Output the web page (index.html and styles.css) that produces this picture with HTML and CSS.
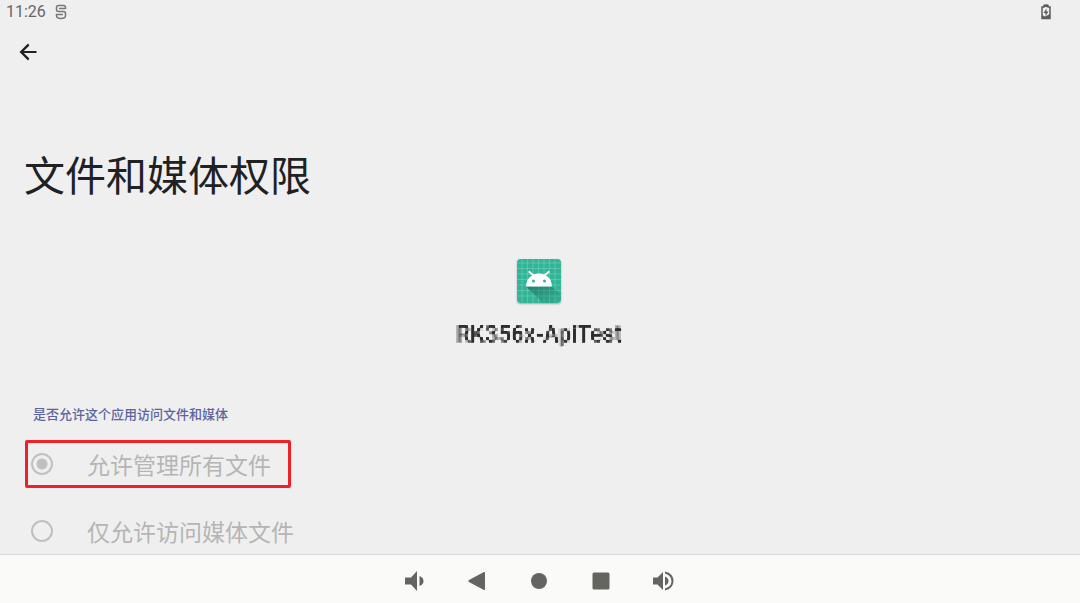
FILE: index.html
```
<!DOCTYPE html>
<html lang="zh-CN">
<head>
    <meta charset="UTF-8">
    <meta name="viewport" content="width=device-width, initial-scale=1.0">
    <title>文件和媒体权限</title>
    <link rel="stylesheet" href="styles.css">
</head>
<body>
    <header class="status-bar">
        <div class="status-left">
            <span class="clock">11:26</span>
            <svg class="notice-icon" viewBox="0 0 12 16" aria-hidden="true">
                <path d="M10.500 5V3.500Q10.500 1.500 8.500 1.500H3.500Q1.500 1.500 1.500 3.500V5.500Q1.500 7.500 3.500 7.500H8.500Q10.500 7.500 10.500 9.500V11.500Q10.500 14.500 6 14.500Q1.500 14.500 1.500 11.500V10.500H8M4 4.500H10.500" />
            </svg>
        </div>
        <svg class="battery-icon" viewBox="0 0 10 16" aria-hidden="true">
            <path class="battery-case" d="M3 1.500H7V3H9V14.500H1V3H3Z" />
            <path class="battery-cap" d="M3 0.500H7V3H3Z" />
            <path class="battery-cap" d="M1 11L4 12.500L9 10V15H1Z" />
            <path class="battery-cap" d="M5.500 4.500L2.500 9H4.500V12L7.500 7.500H5.500Z" />
        </svg>
    </header>

    <main class="content">
        <button class="back-button" type="button" aria-label="返回">
            <svg viewBox="0 0 24 24"><path d="M20.500 11H7.830l5.590-5.590L12 3.500l-8.500 8.500 8.500 8.500 1.410-1.910L7.830 13H20.500z" /></svg>
        </button>

        <h1>文件和媒体权限</h1>

        <section class="app-info">
            <svg class="app-icon" viewBox="0 0 44 44" aria-hidden="true">
                <defs>
                    <linearGradient id="shade" x1="0" y1="0" x2="1" y2="1">
                        <stop offset="0" stop-color="#125c4c" stop-opacity="0.600" />
                        <stop offset="1" stop-color="#125c4c" stop-opacity="0" />
                    </linearGradient>
                </defs>
                <rect width="44" height="44" rx="3" fill="#32b596" />
                <path d="M5 0V44M10.500 0V44M16 0V44M21.500 0V44M27 0V44M32.500 0V44M38 0V44M0 4H44M0 9.500H44M0 15H44M0 20.500H44M0 26H44M0 31.500H44M0 37H44" stroke="#7fd2bf" stroke-width="0.500" />
                <path d="M9 27.500H35L44 36V41Q44 44 41 44H26Z" fill="url(#shade)" />
                <path d="M9 27.500Q9.500 19.500 15 16.500L11 13L12.500 11.800L17 15.500Q22 13.500 27 15.500L31.500 11.800L33 13L29 16.500Q34.500 19.500 35 27.500Z" fill="#fff" />
                <circle cx="16.500" cy="22" r="1.500" fill="#32b596" />
                <circle cx="27.500" cy="22" r="1.500" fill="#32b596" />
            </svg>
            <div class="app-name">RK356x-ApiTest</div>
        </section>

        <fieldset class="permission">
            <legend>是否允许这个应用访问文件和媒体</legend>
            <label class="option highlighted">
                <input type="radio" name="access" checked disabled>
                <span>允许管理所有文件</span>
            </label>
            <label class="option">
                <input type="radio" name="access" disabled>
                <span>仅允许访问媒体文件</span>
            </label>
        </fieldset>
    </main>

    <!-- mosaic over the app name -->
    <svg class="filters" aria-hidden="true">
        <filter id="mosaic" x="0" y="0" width="100%" height="100%">
            <feFlood x="1" y="1" width="1" height="1" />
            <feComposite width="3" height="3" />
            <feTile result="grid" />
            <feComposite in="SourceGraphic" in2="grid" operator="in" />
            <feMorphology operator="dilate" radius="1" result="blocks" />
            <feComposite in="blocks" in2="SourceGraphic" operator="arithmetic" k2="0.750" k3="0.200" />
        </filter>
    </svg>

    <nav class="nav-bar">
        <button type="button" aria-label="降低音量">
            <svg viewBox="0 0 24 24"><path d="M2 8.500V15.500H8L14 22V2L8 8.500ZM16.500 7V17Q20.500 15.500 20.500 12T16.500 7Z" /></svg>
        </button>
        <button type="button" aria-label="返回">
            <svg viewBox="0 0 24 24"><path d="M20 4V20Q20 21.500 18.500 20.700L4 13Q2.500 12 4 11L18.500 3.300Q20 2.500 20 4Z" /></svg>
        </button>
        <button type="button" aria-label="主屏幕">
            <svg viewBox="0 0 24 24"><circle cx="12" cy="12" r="8" /></svg>
        </button>
        <button type="button" aria-label="最近任务">
            <svg viewBox="0 0 24 24"><rect x="3.500" y="3.500" width="17" height="17" rx="1.500" /></svg>
        </button>
        <button type="button" aria-label="提高音量">
            <svg viewBox="0 0 24 24"><path d="M2 8.500V15.500H6.500L12 21V3L6.500 8.500ZM14 7.500V16.500Q17.500 15 17.500 12T14 7.500ZM14 2.500V4.500Q20.500 6.500 20.500 12T14 19.500V21.500Q22.500 19.500 22.500 12T14 2.500Z" /></svg>
        </button>
    </nav>
</body>
</html>
```
FILE: styles.css
```
* {
    margin: 0;
    padding: 0;
    box-sizing: border-box;
}

body {
    display: flex;
    flex-direction: column;
    height: 100vh;
    overflow: hidden;
    background: #efefef;
    color: #202123;
    font-family: Roboto, "Noto Sans CJK SC", sans-serif;
}

button {
    border: none;
    background: none;
    cursor: pointer;
}

.status-bar {
    display: flex;
    flex: none;
    justify-content: space-between;
    align-items: center;
    height: 24px;
    padding: 0 29px 0 6px;
}

.status-left {
    display: flex;
    align-items: center;
    gap: 9px;
}

.clock {
    color: #666;
    font-size: 16px;
    line-height: 24px;
}

.notice-icon {
    width: 12px;
    height: 16px;
    fill: none;
    stroke: #777;
    stroke-width: 1.5;
}

.battery-icon {
    width: 10px;
    height: 16px;
}

.battery-case {
    fill: none;
    stroke: #5c5c5c;
    stroke-width: 1.5;
}

.battery-cap {
    fill: #5c5c5c;
}

.content {
    flex: 1;
    min-height: 0;
    overflow: hidden;
    padding: 16px 24px 0;
}

.back-button {
    display: block;
    width: 24px;
    height: 24px;
    margin-left: -8px;
}

.back-button svg {
    display: block;
    width: 24px;
    height: 24px;
    fill: #222;
}

h1 {
    margin-top: 83px;
    font-size: 41px;
    font-weight: 400;
    line-height: 60px;
}

.app-info {
    display: flex;
    flex-direction: column;
    align-items: center;
    gap: 16px;
    margin-top: 52px;
    padding-right: 2px;
}

.app-icon {
    width: 44px;
    height: 44px;
    border-radius: 3px;
    box-shadow: 0 1px 2px rgba(0, 0, 0, 0.3);
}

.app-name {
    font-size: 23px;
    font-weight: 500;
    line-height: 32px;
    filter: url(#mosaic);
}

.filters {
    position: absolute;
    width: 0;
    height: 0;
}

.permission {
    display: flex;
    flex-direction: column;
    align-items: flex-start;
    margin-top: 54px;
    border: none;
}

.permission legend {
    margin-bottom: 15px;
    padding-left: 9px;
    color: #5b64a3;
    font-size: 13px;
    font-weight: 500;
    line-height: 20px;
}

.option {
    display: flex;
    align-items: center;
    gap: 34px;
    height: 48px;
    margin: 0 0 19px 1px;
    padding: 0 17px 0 3px;
    border: 3px solid transparent;
    color: #b5b5b5;
    font-size: 23px;
    line-height: 32px;
}

.option span {
    padding-top: 5px;
}

.option.highlighted {
    border-color: #ee2029;
    border-radius: 2px;
}

.option input {
    appearance: none;
    width: 22px;
    height: 22px;
    border: 2px solid #c0c0c2;
    border-radius: 50%;
}

.option input:checked {
    background: radial-gradient(circle, #c0c0c2 5px, transparent 6px);
}

.nav-bar {
    display: flex;
    flex: none;
    justify-content: center;
    align-items: center;
    gap: 38px;
    height: 49px;
    padding: 3px 2px 0 0;
    border-top: 1px solid #d9d9d9;
    background: #fafaf8;
}

.nav-bar button,
.nav-bar svg {
    display: block;
    width: 24px;
    height: 24px;
    fill: #646461;
}
```
